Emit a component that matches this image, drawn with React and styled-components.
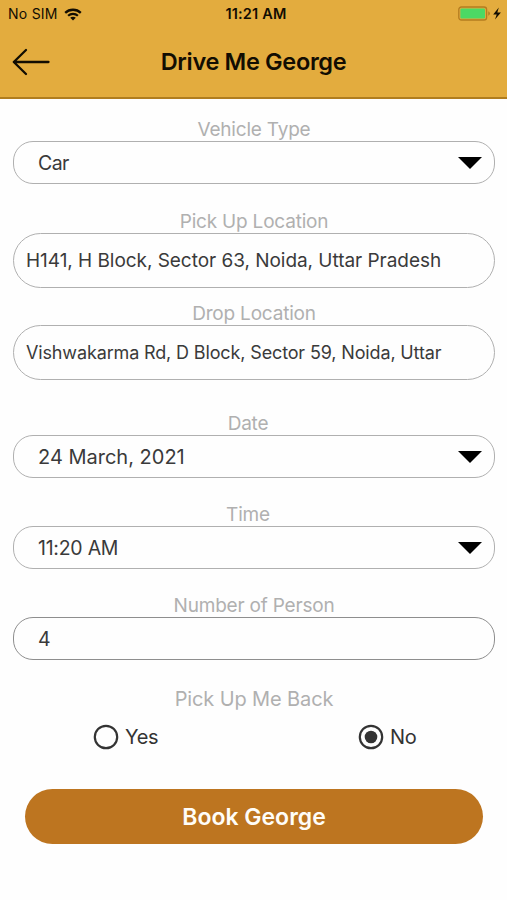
import { useState } from "react";
import styled, { createGlobalStyle } from "styled-components";

function DriveForm() {

    const [back, setBack] = useState("No");

    return (
      <Screen>
        <Header>
            <StatusBar>
                <Carrier>
                    <Txt $size={14} $ls={0.25}>No SIM</Txt>
                    <svg width="18" height="13" viewBox="0 0 18 13" fill="none">
                        <path d="M1.2 4.8C5.5 0.7 12.5 0.7 16.8 4.8" stroke="#120d02" strokeWidth="2.3"/>
                        <path d="M4.1 7.8C6.9 5.2 11.1 5.2 13.9 7.8" stroke="#120d02" strokeWidth="2.2"/>
                        <path d="M9 12.4L6.2 9.8C7.8 8.4 10.2 8.4 11.8 9.8Z" fill="#120d02"/>
                    </svg>
                </Carrier>
                <Clock $size={14.5} $weight={600} $ls={0.2}>11:21 AM</Clock>
                <Battery>
                    <svg width="44" height="16" viewBox="0 0 44 16" fill="none">
                        <rect x="0.8" y="1" width="27.8" height="13" rx="2.6" stroke="#b47c20" strokeWidth="1.3"/>
                        <rect x="2.4" y="2.6" width="24.6" height="9.8" rx="1.2" fill="#4cd964"/>
                        <path d="M30.4 5.3C32.3 6.1 32.3 8.9 30.4 9.7Z" fill="#a8741e"/>
                        <path d="M40.8 1.5L35.2 8.6H38.7L37 13.6L42.9 6.5H39.3Z" fill="#120d02"/>
                    </svg>
                </Battery>
            </StatusBar>
            <NavBar>
                <BackButton aria-label="Back">
                    <svg width="38" height="28" viewBox="0 0 38 28" fill="none">
                        <path d="M14 2L1.8 14L14 26M1.8 14H36.5" stroke="#120d02" strokeWidth="2.3" strokeLinecap="round" strokeLinejoin="round"/>
                    </svg>
                </BackButton>
                <Title>Drive Me George</Title>
            </NavBar>
        </Header>

        <Form>
            <Field label="Vehicle Type" value="Car" select gap={19} size={19.5} ls={-0.6} />
            <Field label="Pick Up Location" value="H141, H Block, Sector 63, Noida, Uttar Pradesh" tall gap={26} size={19} ls={-0.04} />
            <Field label="Drop Location" value="Vishwakarma Rd, D Block, Sector 59, Noida, Uttar" tall gap={14} size={18} ls={-0.14} />
            <Field label="Date" value="24 March, 2021" select shift gap={32} size={20} />
            <Field label="Time" value="11:20 AM" select shift gap={25} size={19.5} ls={-0.25} />
            <Field label="Number of Person" value="4" dark gap={25} size={19.5} />

            <Group $gap={27}>
                <Label $size={20} $ls={-0.12}>Pick Up Me Back</Label>
                <RadioRow>
                    {["Yes", "No"].map((item) => (
                        <Radio key={item} onClick={() => setBack(item)}>
                            <svg width="26" height="26" viewBox="0 0 26 26" fill="none">
                                <circle cx="13" cy="13" r="11.2" stroke="#333" strokeWidth="2.2"/>
                                {back === item && <circle cx="13" cy="13" r="6.3" fill="#333"/>}
                            </svg>
                            <span>{item}</span>
                        </Radio>
                    ))}
                </RadioRow>
            </Group>
            <BookButton>Book George</BookButton>
        </Form>
        <GlobalStyle />
      </Screen>
    )
}

function Field({ label, value, select, tall, dark, shift, gap, size, ls }) {
    return (
      <Group $gap={gap}>
        <Label $shift={shift}>{label}</Label>
        <Box $tall={tall} $dark={dark}>
            <Value $size={size} $ls={ls}>{value}</Value>
            {select && (
                <svg width="24" height="12" viewBox="0 0 24 12">
                    <path d="M0 0H24L12 12Z" fill="#000"/>
                </svg>
            )}
        </Box>
      </Group>
    )
}

export default DriveForm

const GlobalStyle = createGlobalStyle`
    * { box-sizing: border-box; }

    body {
        margin: 0;
        background: #fefefe;
        font-family: Inter, "Liberation Sans", sans-serif;
    }

    svg {
        display: block;
        flex-shrink: 0;
    }

    button {
        padding: 0;
        border: 0;
        background: none;
        font-family: inherit;
    }
`

const Screen = styled.div`
    width: 100%;
    height: 900px;
    overflow: hidden;
`

const Header = styled.header`
    height: 99px;
    background: #e3ac3e;
    border-bottom: 2px solid #b07d1f;
`

const StatusBar = styled.div`
    height: 28px;
    padding: 0 5px 0 8px;
    display: grid;
    grid-template-columns: 1fr auto 1fr;
    align-items: center;
`

const Carrier = styled.div`
    display: flex;
    align-items: center;
    gap: 6px;
`

const Txt = styled.span`
    font-size: ${({ $size }) => $size}px;
    font-weight: ${({ $weight }) => $weight || 400};
    letter-spacing: ${({ $ls }) => $ls || 0}px;
    line-height: 28px;
    color: #120d02;
    white-space: nowrap;
`

const Clock = styled(Txt)`
    padding-left: 2px;
`

const Battery = styled.div`
    display: flex;
    justify-content: flex-end;
`

const NavBar = styled.div`
    height: 68px;
    padding: 0 12px;
    display: grid;
    grid-template-columns: 38px 1fr 38px;
    align-items: center;
`

const BackButton = styled.button`
    display: flex;
`

const Title = styled.h1`
    margin: 0;
    font-size: 23.5px;
    font-weight: 600;
    line-height: 30px;
    letter-spacing: -0.33px;
    text-align: center;
    color: #120d02;
`

const Form = styled.main`
    padding: 0 12px 0 13px;
    display: flex;
    flex-direction: column;
`

const Group = styled.div`
    margin-top: ${({ $gap }) => $gap}px;
`

const Label = styled.div`
    height: 23px;
    padding-right: ${({ $shift }) => ($shift ? 12 : 0)}px;
    font-size: ${({ $size }) => $size || 19}px;
    letter-spacing: ${({ $ls }) => $ls || -0.2}px;
    line-height: 24px;
    text-align: center;
    color: #b0b0b0;
`

const Box = styled.div`
    height: ${({ $tall }) => ($tall ? 55 : 43)}px;
    padding: ${({ $tall }) => ($tall ? "0 12px" : "0 12px 0 24px")};
    border: 1px solid ${({ $dark }) => ($dark ? "#8e8e8e" : "#b0b0b0")};
    border-radius: ${({ $tall }) => ($tall ? 28 : 20)}px;
    display: flex;
    align-items: center;
    justify-content: space-between;
`

const Value = styled.span`
    font-size: ${({ $size }) => $size}px;
    letter-spacing: ${({ $ls }) => $ls || 0}px;
    line-height: 24px;
    color: #3a3a3a;
    white-space: nowrap;
`

const RadioRow = styled.div`
    padding-top: 14px;
    padding-left: 80px;
    display: grid;
    grid-template-columns: 265px 1fr;
`

const Radio = styled.div`
    display: flex;
    align-items: center;
    gap: 6px;
    font-size: 20px;
    letter-spacing: -0.3px;
    line-height: 26px;
    color: #333;
`

const BookButton = styled.button`
    height: 55px;
    margin: 39px 12px 0;
    border-radius: 28px;
    background: #bd7520;
    font-size: 23px;
    font-weight: 600;
    line-height: 28px;
    color: #fffdf8;
`
